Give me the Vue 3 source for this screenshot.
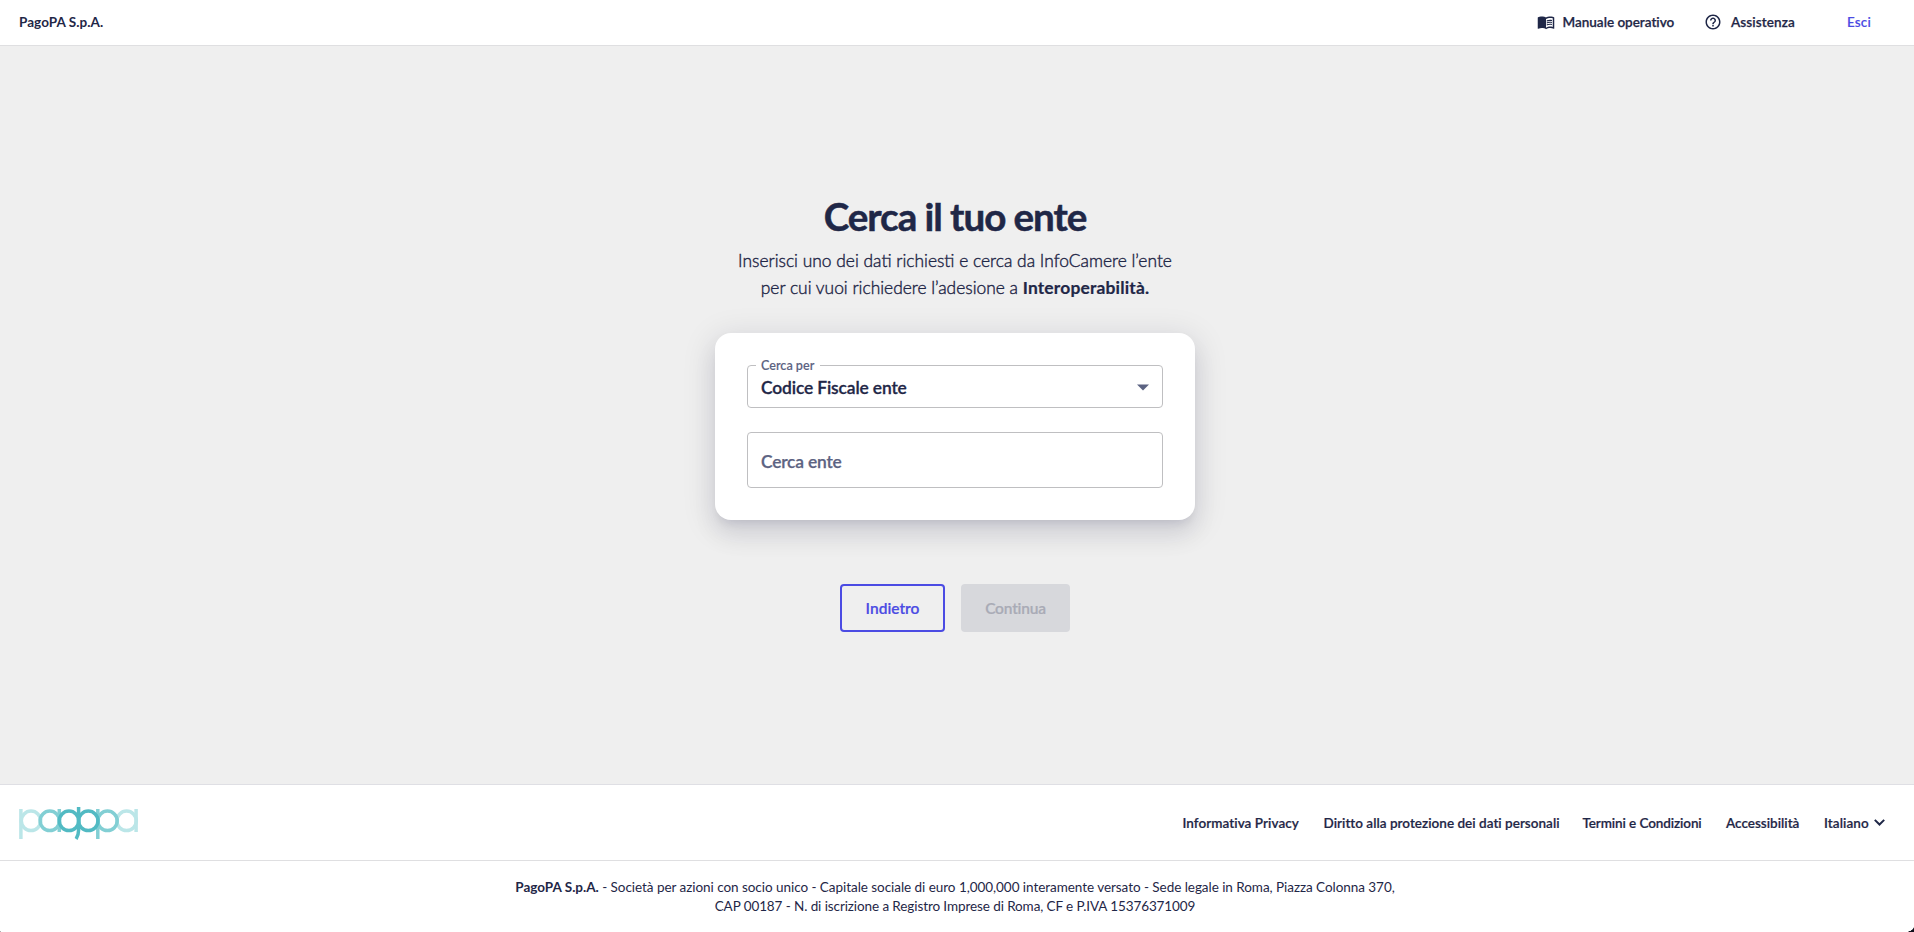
<script setup>
const footerLinks = [
  { label: 'Informativa Privacy', cls: 'privacy' },
  { label: 'Diritto alla protezione dei dati personali', cls: 'rights' },
  { label: 'Termini e Condizioni', cls: 'terms' },
  { label: 'Accessibilità', cls: 'a11y' },
]
</script>

<template>
  <div class="page">
    <header class="header">
      <span class="brand">PagoPA S.p.A.</span>
      <nav class="header-nav">
        <a class="nav-item manual">
          <svg width="18" height="18" viewBox="0 0 24 24" fill="currentColor">
            <path d="M17.5 4.5c-1.95 0-4.05.4-5.5 1.5-1.45-1.1-3.55-1.5-5.5-1.5S2.45 4.9 1 6v14.65c0 .25.25.5.5.5.1 0 .15-.05.25-.05C3.1 20.45 5.05 20 6.5 20c1.95 0 4.05.4 5.5 1.5 1.35-.85 3.8-1.5 5.5-1.5 1.65 0 3.35.3 4.75 1.05.1.05.15.05.25.05.25 0 .5-.25.5-.5V6c-.6-.45-1.25-.75-2-1-1.11-.35-2.33-.5-3.5-.5zM21 18.5c-1.1-.35-2.3-.5-3.5-.5-1.7 0-4.15.65-5.5 1.5V8c1.35-.85 3.8-1.5 5.5-1.5 1.2 0 2.4.15 3.5.5v11.5z" />
            <path d="M17.5 10.5c.88 0 1.73.09 2.5.26V9.24c-.79-.15-1.64-.24-2.5-.24-1.7 0-3.24.29-4.5.83v1.66c1.13-.64 2.7-.99 4.5-.99zM13 12.49v1.66c1.13-.64 2.7-.99 4.5-.99.88 0 1.73.09 2.5.26V11.9c-.79-.15-1.64-.24-2.5-.24-1.7 0-3.24.3-4.5.83zM17.5 14.33c-1.7 0-3.24.29-4.5.83v1.66c1.13-.64 2.7-.99 4.5-.99.88 0 1.73.09 2.5.26v-1.52c-.79-.16-1.64-.24-2.5-.24z" />
          </svg>
          <span>Manuale operativo</span>
        </a>
        <a class="nav-item help">
          <svg width="18" height="18" viewBox="0 0 24 24" fill="currentColor">
            <path d="M11 18h2v-2h-2v2zm1-16C6.48 2 2 6.48 2 12s4.48 10 10 10 10-4.48 10-10S17.52 2 12 2zm0 18c-4.41 0-8-3.59-8-8s3.59-8 8-8 8 3.59 8 8-3.59 8-8 8zm0-14c-2.21 0-4 1.79-4 4h2c0-1.1.9-2 2-2s2 .9 2 2c0 2-3 1.75-3 5h2c0-2.25 3-2.5 3-5 0-2.21-1.79-4-4-4z" />
          </svg>
          <span>Assistenza</span>
        </a>
        <a class="exit">Esci</a>
      </nav>
    </header>

    <main class="main">
      <h1>Cerca il tuo ente</h1>
      <p class="intro">
        <span>Inserisci uno dei dati richiesti e cerca da InfoCamere l’ente</span><br />
        per cui vuoi richiedere l’adesione a <b>Interoperabilità.</b>
      </p>

      <section class="card">
        <div class="field select">
          <span class="field-label">Cerca per</span>
          <span class="field-value">Codice Fiscale ente</span>
          <svg class="caret" width="24" height="24" viewBox="0 0 24 24"><path d="M6 9.500l6 6 6-6z" fill="currentColor" /></svg>
        </div>
        <div class="field input">
          <span class="placeholder">Cerca ente</span>
        </div>
      </section>

      <div class="actions">
        <button class="btn back">Indietro</button>
        <button class="btn next" disabled>Continua</button>
      </div>
    </main>

    <footer class="footer">
      <div class="footer-top">
        <svg class="logo" width="120" height="34" viewBox="0 0 120 34" fill="none" stroke-width="3.5">
          <g stroke="#bbe6e8">
            <path d="M1.9 3v30" />
            <circle cx="12" cy="14.8" r="9.7" />
            <circle cx="107.6" cy="14.8" r="9.7" />
            <path d="M117.1 3v23" />
          </g>
          <g stroke="#82cfd4">
            <path d="M40.3 3v23M78.8 3v30" />
            <circle cx="30.8" cy="14.8" r="9.7" />
            <circle cx="88.5" cy="14.8" r="9.7" />
          </g>
          <g stroke="#51bac3">
            <circle cx="50" cy="14.8" r="9.7" />
            <circle cx="69.3" cy="14.8" r="9.7" />
            <path d="M59.6 1v23c0 4-.9 6.6-2.5 9" />
          </g>
        </svg>
        <nav class="footer-nav">
          <a v-for="link in footerLinks" :key="link.label" :class="link.cls">{{ link.label }}</a>
          <a class="lang">
            <span>Italiano</span>
            <svg width="11" height="7" viewBox="0 0 11 7" fill="none" stroke="currentColor" stroke-width="2"><path d="M.8.9l4.7 4.6L10.2.9" /></svg>
          </a>
        </nav>
      </div>
      <div class="legal">
        <p class="legal-first"><b>PagoPA S.p.A.</b> - Società per azioni con socio unico - Capitale sociale di euro 1,000,000 interamente versato - Sede legale in Roma, Piazza Colonna 370,</p>
        <p class="legal-second">CAP 00187 - N. di iscrizione a Registro Imprese di Roma, CF e P.IVA 15376371009</p>
      </div>
    </footer>
    <i class="corner left"></i>
    <i class="corner right"></i>
  </div>
</template>

<style>
body { background: #fff; }
</style>

<style scoped>
* { box-sizing: border-box; }
.page {
  position: relative;
  display: flex;
  flex-direction: column;
  width: 1914px;
  height: 932px;
  overflow: hidden;
  font-family: Lato, "Open Sans", sans-serif;
  color: #1f2747;
  white-space: nowrap;
}
.header {
  flex: none;
  height: 46px;
  display: flex;
  align-items: center;
  justify-content: space-between;
  padding: 0 43px 1px 19px;
  border-bottom: 1px solid #dfdfe1;
  background: #fff;
  font-size: 13.5px;
  font-weight: 600;
}
.brand { font-weight: 700; letter-spacing: 0.05px; }
.header-nav { display: flex; align-items: center; }
.nav-item { display: flex; align-items: center; -webkit-text-stroke: 0.25px currentColor; }
.nav-item svg { flex: none; }
.manual { width: 167px; gap: 7.5px; letter-spacing: -0.01px; }
.help { width: 143px; gap: 9px; letter-spacing: 0.1px; }
.exit { width: 24px; color: #4b4be3; letter-spacing: 0.15px; -webkit-text-stroke: 0.1px currentColor; }

.main {
  flex: none;
  height: 738px;
  padding: 143px 4px 0 0;
  display: flex;
  flex-direction: column;
  align-items: center;
  background: #efefef;
}
h1 {
  margin: 0;
  height: 54px;
  line-height: 54px;
  font-size: 38.6px;
  font-weight: 700;
  letter-spacing: -1.05px;
  -webkit-text-stroke: 0.5px currentColor;
}
.intro {
  margin: 4px 0 0;
  text-align: center;
  font-size: 17.4px;
  line-height: 27px;
  font-weight: 300;
  -webkit-text-stroke: 0.4px currentColor;
}
.intro b { font-weight: 700; letter-spacing: 0.18px; -webkit-text-stroke: 0.2px currentColor; }
.card {
  margin-top: 32px;
  width: 480px;
  height: 187px;
  padding: 32px;
  display: flex;
  flex-direction: column;
  gap: 24px;
  border-radius: 16px;
  background: #fff;
  box-shadow: 0 8px 10px -5px rgba(0, 0, 50, 0.1), 0 16px 24px 2px rgba(0, 0, 50, 0.05), 0 6px 30px 5px rgba(0, 0, 50, 0.1);
}
.field {
  position: relative;
  display: flex;
  align-items: center;
  padding: 0 7px 0 13px;
  border: 1px solid #bfbfc1;
  border-radius: 4px;
  font-size: 17.4px;
  font-weight: 600;
}
.select { height: 43px; justify-content: space-between; }
.input { height: 56px; }
.field-label {
  position: absolute;
  left: 8px;
  top: -9px;
  padding: 0 6px 0 5px;
  line-height: 18px;
  background: #fff;
  font-size: 12.6px;
  color: #5c6382;
  -webkit-text-stroke: 0.1px currentColor;
}
.field-value { padding-top: 1px; letter-spacing: -0.13px; -webkit-text-stroke: 0.3px currentColor; }
.caret { color: #5c6382; }
.placeholder { padding-top: 2px; color: #5c6382; letter-spacing: -0.2px; -webkit-text-stroke: 0.25px currentColor; }
.actions { display: flex; gap: 16px; margin-top: 64px; }
.btn {
  height: 48px;
  padding: 0;
  border: 0;
  border-radius: 4px;
  font: 600 15.5px Lato, "Open Sans", sans-serif;
  -webkit-text-stroke: 0.2px currentColor;
}
.back { width: 105px; border: 2px solid #4b4be3; background: transparent; color: #4b4be3; }
.next { width: 109px; background: #d7d8dc; color: #a9abb6; letter-spacing: -0.2px; }

.footer { flex: none; background: #fff; border-top: 1px solid #dfdfe4; }
.footer-top {
  height: 76px;
  display: flex;
  align-items: center;
  justify-content: space-between;
  padding: 0 29px 0 19px;
  border-bottom: 1px solid #dfdfe1;
}
.footer-nav {
  display: flex;
  gap: 24px;
  font-size: 13.5px;
  font-weight: 600;
  -webkit-text-stroke: 0.2px currentColor;
}
.privacy { width: 117px; letter-spacing: 0.05px; }
.rights { width: 235px; letter-spacing: 0.02px; }
.terms { width: 119.5px; letter-spacing: -0.1px; }
.a11y { width: 74px; }
.lang { width: 61px; display: flex; align-items: center; justify-content: space-between; letter-spacing: 0.08px; }
.legal {
  padding: 17px 4px 0 0;
  text-align: center;
  font-size: 13.5px;
  line-height: 19px;
  font-weight: 400;
}
.legal p { margin: 0; }
.legal-first { letter-spacing: -0.045px; }
.legal-first b { letter-spacing: 0; }
.legal-second { letter-spacing: -0.094px; }
/* Rounded window edge showing the desktop behind it */
.corner { position: absolute; bottom: 0; }
.left { left: 0; width: 5px; height: 2px; background: radial-gradient(ellipse at 100% 0, transparent 75%, #000 100%); }
.right { right: 0; width: 9px; height: 6px; background: radial-gradient(ellipse at 0 0, transparent 68%, #10101c 74%); }
</style>
